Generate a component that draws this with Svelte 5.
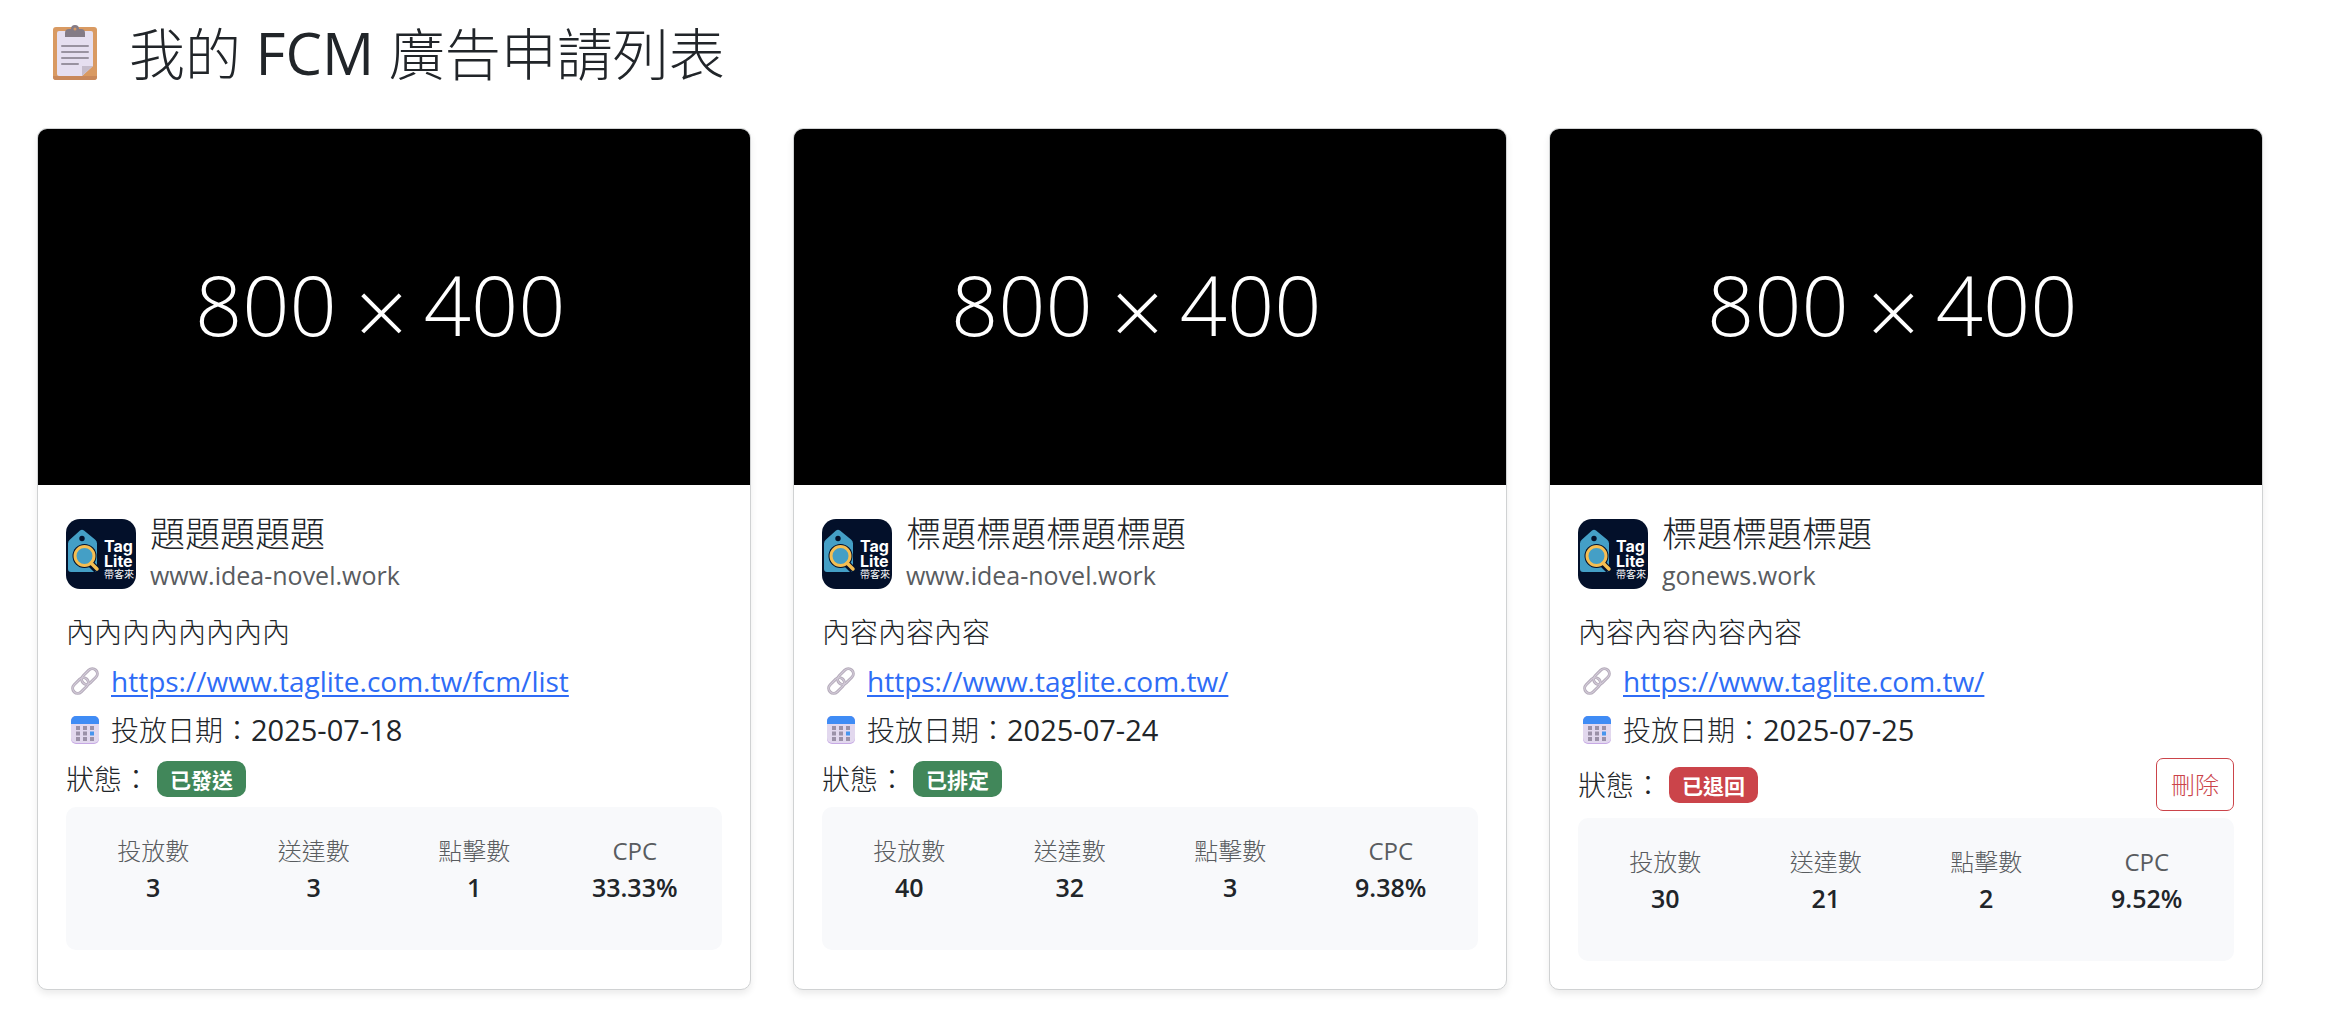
<script>
    const ads = [
        {
            title: '題題題題題',
            domain: 'www.idea-novel.work',
            content: '內內內內內內內內',
            url: 'https://www.taglite.com.tw/fcm/list',
            date: '2025-07-18',
            status: 'sent',
            stats: { sent: '3', delivered: '3', clicks: '1', cpc: '33.33%' }
        },
        {
            title: '標題標題標題標題',
            domain: 'www.idea-novel.work',
            content: '內容內容內容',
            url: 'https://www.taglite.com.tw/',
            date: '2025-07-24',
            status: 'scheduled',
            stats: { sent: '40', delivered: '32', clicks: '3', cpc: '9.38%' }
        },
        {
            title: '標題標題標題',
            domain: 'gonews.work',
            content: '內容內容內容內容',
            url: 'https://www.taglite.com.tw/',
            date: '2025-07-25',
            status: 'rejected',
            stats: { sent: '30', delivered: '21', clicks: '2', cpc: '9.52%' }
        }
    ];

    const statusLabels = { sent: '已發送', scheduled: '已排定', rejected: '已退回' };

    const columns = [
        ['sent', '投放數'],
        ['delivered', '送達數'],
        ['clicks', '點擊數'],
        ['cpc', 'CPC']
    ];

    let list = $state(ads);

    function remove(ad) {
        list = list.filter((item) => item !== ad);
    }
</script>

<main>
    <h2>
        <svg class="clipboard" viewBox="0 0 76 60" aria-hidden="true">
            <rect x="16" y="4" width="44" height="53" rx="3" fill="#d99a62" />
            <path d="M16 53h44v1a3 3 0 0 1-3 3H19a3 3 0 0 1-3-3z" fill="#c9885a" />
            <path d="M22 8h32a2 2 0 0 1 2 2v33L45 53H22a2 2 0 0 1-2-2V10a2 2 0 0 1 2-2z" fill="#e6dff0" />
            <path d="M45 53V43h11z" fill="#c5bccb" />
            <path d="M28 14v-4a4 4 0 0 1 4-4h2a4 4 0 0 1 8 0h2a4 4 0 0 1 4 4v4z" fill="#847b86" />
            <circle cx="38" cy="6" r="1.5" fill="#d99a62" />
            <path d="M25 23h26M25 29h26M25 35h26M25 41h16" stroke="#9992a0" stroke-width="2" stroke-linecap="round" />
        </svg>
        <span>我的 <span class="latin">FCM</span> 廣告申請列表</span>
    </h2>

    <div class="grid">
        {#each list as ad}
            <article class="card">
                <svg class="banner" viewBox="0 0 800 400" role="img" aria-label="800 × 400">
                    <rect width="800" height="400" />
                    <text x="256" y="233">800</text>
                    <text x="386" y="244" class="times">×</text>
                    <text x="513" y="233">400</text>
                </svg>

                <div class="body">
                    <div class="head">
                        <svg class="logo" viewBox="0 0 70 70" role="img" aria-label="Tag Lite">
                            <rect width="70" height="70" rx="14" fill="#03102a" />
                            <path d="M14 11.500q2-1.500 4 0l11 9q2 1.500 2 4V50q0 3-3 3H5q-3 0-3-3V24.500q0-2.500 2-4z" fill="#449fc6" />
                            <circle cx="16" cy="19.500" r="2.700" fill="#03102a" />
                            <circle cx="18.500" cy="37" r="12" fill="#03102a" />
                            <path d="M24 44l7 7" stroke="#03102a" stroke-width="7" />
                            <circle cx="18.500" cy="37" r="9.500" fill="#449fc6" stroke="#f5be52" stroke-width="3" />
                            <path d="M25 44l6 6" stroke="#f5be52" stroke-width="3.500" stroke-linecap="round" />
                            <text class="logo-name">
                                <tspan x="38" y="33">Tag</tspan>
                                <tspan x="38" y="48">Lite</tspan>
                                <tspan x="38" y="59" class="logo-sub">帶客來</tspan>
                            </text>
                        </svg>
                        <div>
                            <h5>{ad.title}</h5>
                            <div class="domain">{ad.domain}</div>
                        </div>
                    </div>

                    <p>{ad.content}</p>

                    <p class="line">
                        <svg class="icon" viewBox="0 0 38 28" aria-hidden="true">
                            <g fill="none" stroke="#b4abba" stroke-width="3">
                                <rect x="-9" y="-5" width="18" height="10" rx="5" transform="translate(23.500 9.500) rotate(-45)" />
                                <rect x="-9" y="-5" width="18" height="10" rx="5" transform="translate(14.500 18.500) rotate(-45)" />
                            </g>
                            <g fill="none" stroke="#d5cdda" stroke-width="1">
                                <rect x="-9" y="-5" width="18" height="10" rx="5" transform="translate(23.500 9.500) rotate(-45)" />
                                <rect x="-9" y="-5" width="18" height="10" rx="5" transform="translate(14.500 18.500) rotate(-45)" />
                            </g>
                        </svg>
                        <a href={ad.url}>{ad.url}</a>
                    </p>

                    <p class="line">
                        <svg class="icon" viewBox="0 0 38 28" aria-hidden="true">
                            <rect x="5" y="0" width="28" height="28" rx="5" fill="#c6a8e4" />
                            <path d="M5 7h28v15a5 5 0 0 1-5 5H10a5 5 0 0 1-5-5z" fill="#e2d8ee" />
                            <path d="M5 8V5a5 5 0 0 1 5-5h18a5 5 0 0 1 5 5v3z" fill="#3f8cf5" />
                            <path d="M10 10h4v4h-4zM17 10h4v4h-4zM24 10h4v4h-4zM10 15.500h4v4h-4zM17 15.500h4v4h-4zM10 21h4v4h-4zM17 21h4v4h-4zM24 21h4v4h-4z" fill="#9b91a8" />
                            <path d="M24 15.500h4v4h-4z" fill="#4795ee" />
                        </svg>
                        <span>投放日期：<time datetime={ad.date}>{ad.date}</time></span>
                    </p>

                    <div class="status">
                        <span>狀態：</span>
                        <span class="badge" class:danger={ad.status === 'rejected'}>{statusLabels[ad.status]}</span>
                        {#if ad.status === 'rejected'}
                            <button type="button" onclick={() => remove(ad)}>刪除</button>
                        {/if}
                    </div>

                    <dl class="stats">
                        {#each columns as [key, label]}
                            <div>
                                <dt>{label}</dt>
                                <dd>{ad.stats[key]}</dd>
                            </div>
                        {/each}
                    </dl>
                </div>
            </article>
        {/each}
    </div>
</main>

<style>
    :global(body) {
        margin: 0;
        background: #fff;
    }

    main {
        padding: 20px 62px 35px 37px;
        font-family: "Open Sans", "Noto Sans CJK TC Light", "Noto Sans CJK TC", sans-serif;
        font-size: 28px;
        line-height: 42px;
        color: #212529;
    }

    h2, h5, p, dl, dd {
        margin: 0;
        font-weight: 400;
    }

    h2 {
        display: flex;
        align-items: center;
        gap: 16px;
        margin-bottom: 42px;
        font-size: 56px;
        line-height: 66px;
    }

    .latin {
        font-size: 58px;
    }

    .clipboard {
        width: 76px;
        height: 60px;
    }

    .grid {
        display: grid;
        grid-template-columns: repeat(3, 1fr);
        gap: 42px;
    }

    .card {
        border: 1px solid #d0d2d3;
        border-radius: 10px;
        overflow: hidden;
        background: #fff;
        box-shadow: 0 4px 7px rgba(0, 0, 0, 0.08);
    }

    .banner {
        display: block;
        width: 100%;
    }

    .banner text {
        fill: #fff;
        font-size: 93px;
        font-weight: 300;
        text-anchor: middle;
    }

    .banner .times {
        font-size: 104px;
    }

    .body {
        padding: 28px;
    }

    .head {
        display: flex;
        align-items: center;
        gap: 14px;
        margin-bottom: 16px;
    }

    .logo {
        width: 70px;
        height: 70px;
    }

    .logo-name {
        fill: #fff;
        font-family: Inter, sans-serif;
        font-size: 16px;
        font-weight: 700;
    }

    .logo-sub {
        font-family: "Noto Sans CJK TC", sans-serif;
        font-size: 10px;
        font-weight: 400;
    }

    h5 {
        font-size: 35px;
        line-height: 42px;
    }

    .domain {
        font-size: 25px;
        line-height: 40px;
        color: #595c5f;
    }

    p {
        margin-bottom: 7px;
    }

    .line {
        display: flex;
        align-items: center;
        gap: 7px;
    }

    .icon {
        flex: none;
        width: 38px;
        height: 28px;
    }

    a {
        color: #2e6cf6;
        text-underline-offset: 3px;
    }

    time {
        font-size: 29px;
    }

    .status {
        display: flex;
        align-items: center;
        gap: 7px;
        margin-bottom: 7px;
    }

    .badge {
        padding: 7px 13px;
        border-radius: 10px;
        background: #41875a;
        color: #fff;
        font-size: 21px;
        font-weight: 700;
        line-height: 22px;
        font-family: "Noto Sans CJK TC", sans-serif;
    }

    .badge.danger {
        background: #cb444a;
    }

    button {
        margin-left: auto;
        padding: 7px 14px;
        border: 1px solid #cb444a;
        border-radius: 7px;
        background: transparent;
        color: #cb444a;
        font-family: inherit;
        font-size: 24px;
        line-height: 37px;
    }

    .stats {
        display: grid;
        grid-template-columns: repeat(4, 1fr);
        padding: 26px 7px 45px;
        border-radius: 10px;
        background: #f8f9fb;
        text-align: center;
    }

    dt {
        font-size: 24px;
        line-height: 36px;
        color: #595c5f;
    }

    dd {
        font-size: 25px;
        font-weight: 600;
        line-height: 36px;
    }
</style>
